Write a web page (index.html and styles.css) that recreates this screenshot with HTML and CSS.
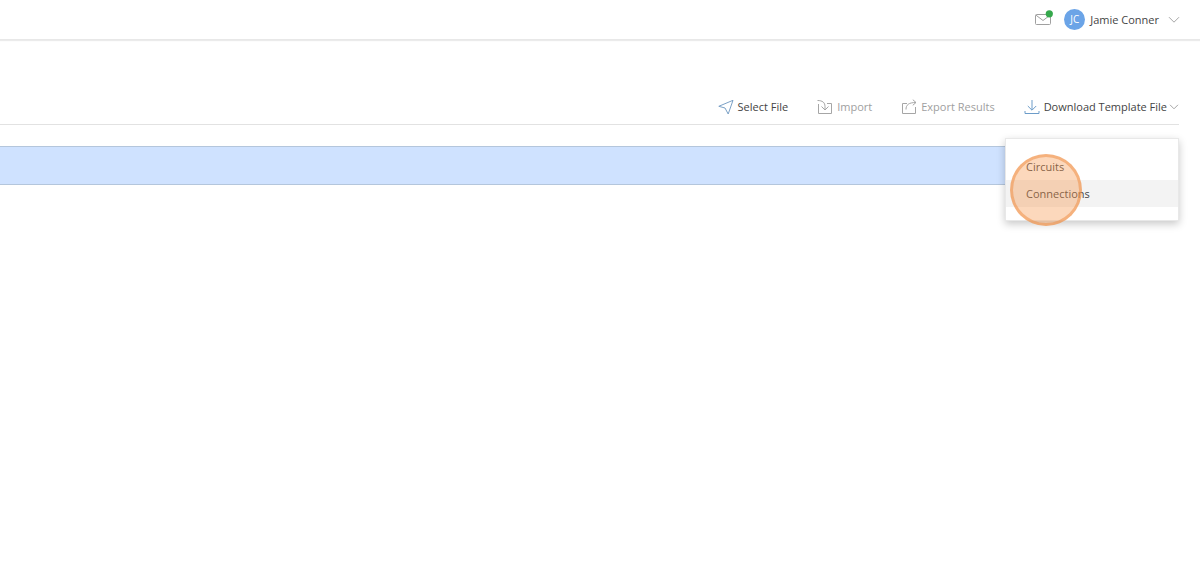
FILE: index.html
```html
<!DOCTYPE html>
<html lang="en">
<head>
<meta charset="utf-8">
<title>Import</title>
<link rel="stylesheet" href="styles.css">
</head>
<body>
<header class="topbar">
  <button class="mail" type="button" aria-label="Messages">
    <svg width="18" height="19" viewBox="0 0 18 19" fill="none">
      <rect x="0.5" y="4.5" width="15" height="10" rx="1" stroke="#a0a0a0"/>
      <path d="M1 5.2 8 10.5 15 5.2" stroke="#a0a0a0"/>
      <circle cx="14.3" cy="3.8" r="3.6" fill="#35a84c"/>
    </svg>
  </button>
  <button class="account" type="button">
    <span class="avatar">JC</span>
    <span class="name">Jamie Conner</span>
    <svg class="caret" width="12" height="8" viewBox="0 0 12 8" fill="none" stroke="#a6a6a6"><path d="M1 1.2 6 6.2 11 1.2"/></svg>
  </button>
</header>
<main class="page">
  <div class="toolbar">
    <button class="tool" type="button">
      <svg width="16" height="16" viewBox="0 0 16 16" fill="none" stroke="#7ba1c6" stroke-linejoin="round"><path d="M15 1.300 .8 7.300l6.200 1.700 3.200 6Z"/></svg>
      <span>Select File</span>
    </button>
    <button class="tool" type="button" disabled>
      <svg width="16" height="16" viewBox="0 0 16 16" fill="none" stroke="#a6a6a6"><path d="M1.500 5v9.500h13v-10H10M.5 1.500c5 0 7.500 2 7.500 6v3M4.500 7.500 8 11l3.500-3.500"/></svg>
      <span>Import</span>
    </button>
    <button class="tool" type="button" disabled>
      <svg width="16" height="16" viewBox="0 0 16 16" fill="none" stroke="#a6a6a6"><path d="M6 4.500H1.500v10h13V8M5 10.500c0-4.500 2.500-7 10-7M11.800 .7l3.200 2.800-3.200 2.800"/></svg>
      <span>Export Results</span>
    </button>
    <div class="dropdown">
      <button class="tool" type="button" aria-expanded="true">
        <svg width="16" height="16" viewBox="0 0 16 16" fill="none" stroke="#6c9cc9"><path d="M8 1v10M3.800 7 8 11.200 12.200 7M1 12v2.500h14V12"/></svg>
        <span>Download Template File</span>
        <svg class="caret" width="10" height="6" viewBox="0 0 10 6" fill="none" stroke="#a6a6a6"><path d="M1 .8 5 4.800 9 .8"/></svg>
      </button>
      <div class="menu">
        <button class="option" type="button">Circuits</button>
        <button class="option active" type="button">Connections</button>
        <span class="click-marker"></span>
      </div>
    </div>
  </div>
  <div class="banner"></div>
</main>
</body>
</html>
```
FILE: styles.css
```css
* {
  box-sizing: border-box;
}

body {
  min-height: 100vh;
  margin: 0;
  background: #fff;
  color: #444;
  font: 11px/16px "Open Sans", "Noto Sans", sans-serif;
}

button {
  border: 0;
  padding: 0;
  background: none;
  color: inherit;
  font: inherit;
}

svg {
  display: block;
  flex: none;
}

.topbar {
  display: flex;
  justify-content: flex-end;
  align-items: center;
  gap: 11px;
  height: 40px;
  padding-right: 20px;
  border-bottom: 1px solid #e8e8e8;
  box-shadow: 0 1px 1px rgba(0, 0, 0, 0.08);
}

.account {
  display: flex;
  align-items: center;
  gap: 5px;
}

.account .caret {
  margin-left: 4px;
}

.avatar {
  width: 21px;
  height: 21px;
  border-radius: 50%;
  background: #6ba4e7;
  color: #fff;
  font-size: 10px;
  line-height: 20px;
  text-align: center;
}

.page {
  padding: 50px 21px 0 0;
}

.toolbar {
  display: flex;
  justify-content: flex-end;
  gap: 29px;
  border-bottom: 1px solid #e2e2e2;
}

.tool {
  display: flex;
  align-items: center;
  gap: 4px;
  height: 34px;
}

.tool .caret {
  margin-left: -2px;
}

.tool:disabled {
  color: #a0a0a0;
}

.dropdown {
  position: relative;
}

.menu {
  position: absolute;
  z-index: 1;
  top: 48px;
  right: 0;
  width: 174px;
  padding: 14px 0 13px;
  border: 1px solid #e8e8e8;
  background: #fff;
  box-shadow: 0 3px 8px rgba(0, 0, 0, 0.22);
}

.option {
  display: block;
  width: 100%;
  height: 27px;
  padding-left: 20px;
  text-align: left;
}

.option.active {
  background: #f3f3f3;
}

.click-marker {
  position: absolute;
  top: 15px;
  left: 4px;
  width: 72px;
  height: 72px;
  border: 3px solid rgba(237, 137, 62, 0.5);
  border-radius: 50%;
  background: rgba(246, 152, 79, 0.38);
  pointer-events: none;
}

.banner {
  height: 39px;
  margin-top: 21px;
  border: solid #b4c6dc;
  border-width: 1px 0;
  background: #cfe2ff;
}
```
